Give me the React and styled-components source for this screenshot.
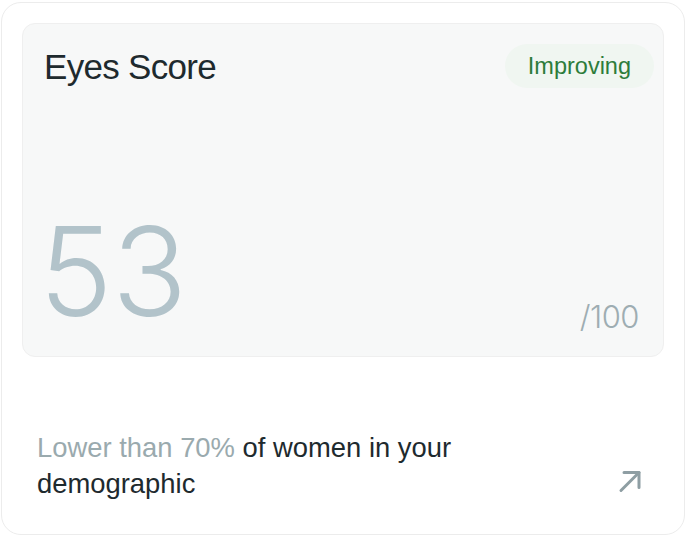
import React from "react";
import styled, { createGlobalStyle } from "styled-components";

const Global = createGlobalStyle`
  html, body { margin: 0; padding: 0; background: #ffffff; }
  body { font-family: "Liberation Sans", Arial, sans-serif; }
  * { box-sizing: border-box; }
`;

const Card = styled.div`
  margin: 2px 2px 0 1px;
  width: 684px;
  height: 533px;
  border: 1px solid #ececec;
  border-radius: 20px;
  background: #ffffff;
  padding: 20px 20px 0 20px;
  display: flex;
  flex-direction: column;
`;

const ScorePanel = styled.div`
  height: 334px;
  background: #f7f8f8;
  border: 1px solid #efefef;
  border-radius: 13px;
  padding: 23px 24px 23px 21px;
  display: flex;
  flex-direction: column;
  justify-content: space-between;
`;

const Header = styled.div`
  display: flex;
  justify-content: space-between;
  align-items: flex-start;
`;

const Title = styled.h2`
  margin: 0;
  font-family: "Liberation Sans", Arial, sans-serif;
  font-size: 35px;
  font-weight: 400;
  letter-spacing: -0.7px;
  color: #1e2a2e;
  line-height: 40px;
`;

const Badge = styled.span`
  margin: -3px -15px 0 0;
  padding: 0 23px;
  height: 44px;
  line-height: 44px;
  border-radius: 22px;
  background: #f0f6f1;
  color: #2d7c3b;
  font-size: 23.5px;
`;

const ScoreRow = styled.div`
  display: flex;
  justify-content: space-between;
  align-items: flex-end;
`;

const BigNumber = styled.span`
  font-family: Inter, "Liberation Sans", sans-serif;
  font-size: 124px;
  font-weight: 300;
  letter-spacing: -0.5px;
  line-height: 100px;
  color: #b2c3ca;
  margin: 0 0 12px -5px;
`;

const OutOf = styled.span`
  font-family: Inter, "Liberation Sans", sans-serif;
  font-size: 31px;
  font-weight: 300;
  color: #9eadb2;
  line-height: 32px;
  letter-spacing: -0.5px;
`;

const Footer = styled.div`
  display: flex;
  justify-content: space-between;
  align-items: flex-start;
  padding: 73px 22px 0 15px;
`;

const Comparison = styled.p`
  margin: 0;
  font-size: 27.4px;
  line-height: 36px;
  color: #1e2a2e;
  max-width: 470px;
`;

const Muted = styled.span`
  color: #9aaaae;
`;

const ArrowLink = styled.a`
  display: flex;
  color: #8e9ea3;
  margin-top: 39px;
`;

function ArrowUpRight() {
  return (
    <svg width="24" height="24" viewBox="0 0 24 24" fill="none" stroke="currentColor" strokeWidth="3" strokeLinecap="round" strokeLinejoin="round">
      <path d="M3 21.5 L21 3.5" />
      <path d="M6 3.5 H21 V18.5" />
    </svg>
  );
}

export default function App() {
  return (
    <>
      <Global />
      <Card>
        <ScorePanel>
          <Header>
            <Title>Eyes Score</Title>
            <Badge>Improving</Badge>
          </Header>
          <ScoreRow>
            <BigNumber>53</BigNumber>
            <OutOf>/100</OutOf>
          </ScoreRow>
        </ScorePanel>
        <Footer>
          <Comparison>
            <Muted>Lower than 70%</Muted> of women in your demographic
          </Comparison>
          <ArrowLink href="#" aria-label="Open">
            <ArrowUpRight />
          </ArrowLink>
        </Footer>
      </Card>
    </>
  );
}
